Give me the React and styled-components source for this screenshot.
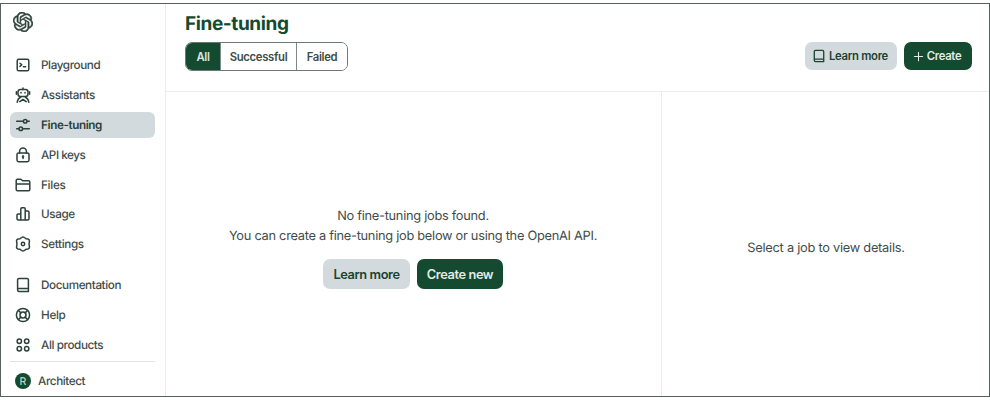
import React from "react";
import styled, { createGlobalStyle } from "styled-components";
import { SiOpenai } from "react-icons/si";

const GREEN = "#144a2f";
const INK = "#3f4c49";
const ICON = "#2c4139";
const SOFT = "#d3dadd";
const LINE = "#ececec";

const Global = createGlobalStyle`
  * { box-sizing: border-box; }
  body { margin: 0; background: #fff; font-family: Inter, "Liberation Sans", sans-serif; color: ${INK}; text-rendering: geometricPrecision; }
  button { font: inherit; margin: 0; cursor: pointer; white-space: nowrap; }
  svg { display: block; flex: none; }
`;

const Page = styled.div`
  height: 400px;
  padding: 3px 0 3px;
`;
const Frame = styled.div`
  display: flex;
  width: 990px;
  height: 394px;
  border: 1px solid #56615e;
`;
const Sidebar = styled.nav`
  display: flex;
  flex-direction: column;
  width: 165px;
  padding: 8px 10px 0 9px;
  border-right: 1px solid ${LINE};
`;
const Logo = styled.div`
  flex: none;
  height: 40.2px;
  padding-left: 3px;
  color: ${ICON};
  svg { stroke: currentColor; stroke-width: 0.6px; }
`;
const Group = styled.div`
  display: flex;
  flex: none;
  flex-direction: column;
  gap: 3.2px;
  margin-bottom: ${(p) => p.$after}px;
`;
const Item = styled.a`
  display: flex;
  align-items: center;
  gap: 10px;
  height: 26.6px;
  padding-left: 5px;
  border-radius: 6px;
  font-size: 11.7px;
  letter-spacing: ${(p) => p.$track || 0}px;
  font-weight: ${(p) => (p.$active ? 600 : 500)};
  background: ${(p) => (p.$active ? SOFT : "transparent")};
  color: ${(p) => (p.$active ? "#2b4038" : INK)};
  svg { color: ${ICON}; }
`;
const Account = styled.div`
  display: flex;
  flex: 1;
  align-items: center;
  gap: 7px;
  padding: 5px 0 0 5px;
  border-top: 1px solid #e2e4e4;
  font-size: 11.7px;
  font-weight: 500;
  letter-spacing: -0.4px;
`;
const Avatar = styled.span`
  display: grid;
  place-items: center;
  width: 16px;
  height: 16px;
  border-radius: 50%;
  background: ${GREEN};
  color: #d6e2da;
  font-size: 10.5px;
  font-weight: 400;
  letter-spacing: 0;
`;
const Main = styled.main`
  display: flex;
  flex: 1;
  flex-direction: column;
`;
const Header = styled.header`
  display: flex;
  justify-content: space-between;
  height: 88px;
  padding: 6px 17px 0 19px;
  border-bottom: 1px solid ${LINE};
`;
const Title = styled.h1`
  margin: 0 0 5px;
  font-size: 19px;
  line-height: 28px;
  height: 27px;
  font-weight: 700;
  letter-spacing: -0.4px;
  color: ${GREEN};
`;
const Tabs = styled.div`
  display: flex;
  width: 163px;
  height: 29px;
  overflow: hidden;
  border: 1px solid #6c7976;
  border-radius: 7px;
`;
const Tab = styled.button`
  flex: 0 0 ${(p) => p.$width}px;
  padding: 0;
  border: 0;
  border-left: ${(p) => (p.$active ? "0" : "1px solid #7d8986")};
  font-size: 11.3px;
  font-weight: 600;
  letter-spacing: -0.32px;
  background: ${(p) => (p.$active ? GREEN : "#fff")};
  color: ${(p) => (p.$active ? "#dce6e0" : INK)};
`;
const Actions = styled.div`
  display: flex;
  gap: 7px;
  padding-top: 32px;
`;
const Button = styled.button`
  display: flex;
  align-items: center;
  justify-content: center;
  gap: 3px;
  width: ${(p) => p.$width}px;
  height: ${(p) => (p.$large ? 30 : 28)}px;
  padding: ${(p) => (p.$large ? "0" : "0 2px 0 0")};
  border: 0;
  border-radius: 7px;
  font-size: ${(p) => (p.$large ? 12.8 : 11.3)}px;
  font-weight: 600;
  letter-spacing: ${(p) => (p.$large ? -0.4 : -0.3)}px;
  background: ${(p) => (p.$primary ? GREEN : SOFT)};
  color: ${(p) => (p.$primary ? "#e3ebe6" : "#1c4231")};
`;
const Body = styled.div`
  display: flex;
  flex: 1;
`;
const Jobs = styled.section`
  display: flex;
  flex-direction: column;
  align-items: center;
  width: 496px;
  padding: 115px 1px 0 0;
  border-right: 1px solid ${LINE};
`;
const Line = styled.p`
  margin: 0;
  font-size: 12.8px;
  line-height: 19.5px;
  letter-spacing: ${(p) => p.$track}px;
  white-space: nowrap;
`;
const Choices = styled.div`
  display: flex;
  gap: 7px;
  margin-top: 13px;
`;
const Details = styled.section`
  flex: 1;
  padding: 147px 0 0 1px;
  text-align: center;
`;

function Glyph({ size = 16, children }) {
  return (
    <svg width={size} height={size} viewBox="0 0 16 16" fill="none" stroke="currentColor" strokeWidth="1.5" strokeLinecap="round" strokeLinejoin="round">
      {children}
    </svg>
  );
}

const icons = {
  playground: <><rect x="2.2" y="2.2" width="11.6" height="11.6" rx="1.6" /><path d="M5 6.2l1.800 1.600L5 9.400M8.400 9.800h2.200" /></>,
  assistants: <><rect x="3" y="2.500" width="10" height="7" rx="2.500" /><path d="M8 1v1.500M1.400 4.800v2.400M14.600 4.800v2.400M6 5.500v.5M10 5.500v.5M2.200 15.200c.4-2.500 1.700-4.200 3.600-5.200M13.800 15.200c-.4-2.500-1.700-4.200-3.600-5.200M4.800 14.600L8 12.500l3.200 2.100" /></>,
  tuning: <><circle cx="10.200" cy="4.300" r="1.800" /><circle cx="5.800" cy="11.700" r="1.800" /><path d="M1.700 4.300h6.500M12.100 4.300h2.200M1.700 11.700h2.200M7.700 11.700h6.600" /></>,
  keys: <><rect x="2" y="6" width="12" height="8.700" rx="1.600" /><path d="M4.600 6V4.500a3.400 3.400 0 016.800 0V6M8 9.600v2" /><circle cx="8" cy="9.500" r=".5" /></>,
  files: <><path d="M1.200 12.500V3.500c0-.8.500-1.300 1.300-1.300h3.400l1.700 1.500h5.900c.8 0 1.300.5 1.300 1.300v7.500c0 .8-.5 1.300-1.300 1.300H2.500c-.8 0-1.300-.5-1.300-1.300zM1.400 7h13.200" /></>,
  usage: <><path d="M5.800 14H3.200c-.7 0-1.200-.4-1.200-1.200V9.100C2 8.400 2.400 8 3.200 8h2.600zM5.800 14V3c0-.7.400-1.200 1.100-1.200h2.200c.7 0 1.100.5 1.100 1.200v11zM10.200 5h2.600c.7 0 1.200.4 1.200 1.200v6.600c0 .7-.4 1.200-1.200 1.200h-7" /></>,
  settings: <><path d="M6.700 1.500Q8 .5 9.300 1.500l1.700 1.200 2 .3q1.500.4 1.500 1.900L14 8l.5 3.100q0 1.500-1.500 1.900l-2 .3-1.700 1.200q-1.300 1-2.600 0L5 13.300 3 13q-1.500-.4-1.500-1.900L2 8l-.5-3.100Q1.500 3.400 3 3l2-.3z" /><circle cx="8" cy="8" r="1.700" /></>,
  docs: <><path d="M4 1.500h8c.8 0 1.400.5 1.400 1.300v11.600H4.200c-.9 0-1.600-.6-1.600-1.500V2.800c0-.8.600-1.300 1.400-1.300zM3 11.500h10.200" /></>,
  help: <><circle cx="8" cy="8" r="6.600" /><circle cx="8" cy="8" r="3" /><path d="M3.500 3.500L5.900 5.900M10.100 10.100l2.400 2.400M12.500 3.500l-2.400 2.400M5.900 10.100l-2.400 2.400" /></>,
  products: <><circle cx="4.300" cy="4.300" r="2.200" /><circle cx="11.700" cy="4.300" r="2.200" /><circle cx="4.300" cy="11.700" r="2.200" /><circle cx="11.700" cy="11.700" r="2.200" /></>,
  plus: <path d="M8 2v12M2 8h12" />,
};

const primary = [
  ["playground", "Playground", -0.4],
  ["assistants", "Assistants", -0.4],
  ["tuning", "Fine-tuning", -0.4],
  ["keys", "API keys", -0.45],
  ["files", "Files", -0.3],
  ["usage", "Usage", -0.4],
  ["settings", "Settings", -0.35],
];
const secondary = [
  ["docs", "Documentation", -0.4],
  ["help", "Help", -0.3],
  ["products", "All products", -0.4],
];

function NavGroup({ items, after }) {
  return (
    <Group $after={after}>
      {items.map(([icon, label, track]) => (
        <Item key={icon} $active={icon === "tuning"} $track={track}>
          <Glyph>{icons[icon]}</Glyph>
          <span>{label}</span>
        </Item>
      ))}
    </Group>
  );
}

export default function App() {
  return (
    <Page>
      <Global />
      <Frame>
        <Sidebar>
          <Logo><SiOpenai size={20} /></Logo>
          <NavGroup items={primary} after={14.2} />
          <NavGroup items={secondary} after={3} />
          <Account><Avatar>R</Avatar><span>Architect</span></Account>
        </Sidebar>
        <Main>
          <Header>
            <div>
              <Title>Fine-tuning</Title>
              <Tabs>
                <Tab $active $width={34}>All</Tab>
                <Tab $width={76}>Successful</Tab>
                <Tab $width={51}>Failed</Tab>
              </Tabs>
            </div>
            <Actions>
              <Button $width={92}><Glyph size={14}>{icons.docs}</Glyph>Learn more</Button>
              <Button $primary $width={68}><Glyph size={11}>{icons.plus}</Glyph>Create</Button>
            </Actions>
          </Header>
          <Body>
            <Jobs>
              <Line $track={-0.27}>No fine-tuning jobs found.</Line>
              <Line $track={-0.27}>You can create a fine-tuning job below or using the OpenAI API.</Line>
              <Choices>
                <Button $large $width={87}>Learn more</Button>
                <Button $large $primary $width={86}>Create new</Button>
              </Choices>
            </Jobs>
            <Details><Line $track={-0.25}>Select a job to view details.</Line></Details>
          </Body>
        </Main>
      </Frame>
    </Page>
  );
}
